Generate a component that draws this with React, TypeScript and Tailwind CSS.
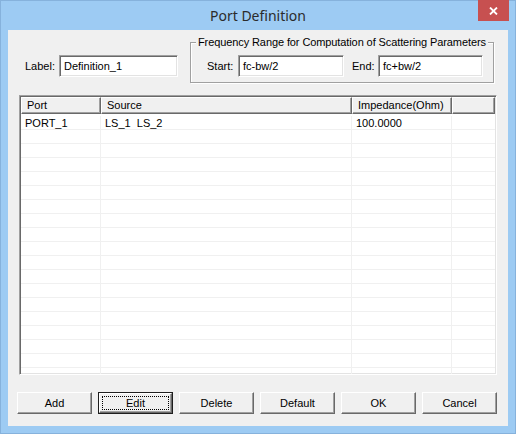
const raised =
  'bg-[#f0f0f0] border-t border-l border-t-white border-l-white border-r border-b border-r-[#696969] border-b-[#696969] shadow-[inset_-1px_-1px_0_#a0a0a0]'

const sunken =
  'border border-t-[#a0a0a0] border-l-[#a0a0a0] border-r-white border-b-white shadow-[inset_1px_1px_0_#696969,inset_-1px_-1px_0_#e3e3e3]'

function Field({ value, width }: { value: string; width: string }) {
  return (
    <div className={`${sunken} ${width} h-[22px] bg-white flex items-center pl-[4px] pt-[1px]`}>
      {value}
    </div>
  )
}

function Button({ label, isDefault = false }: { label: string; isDefault?: boolean }) {
  if (isDefault) {
    return (
      <div className="w-[75px] h-[22px] border border-[#1e1e1e] flex">
        <div className={`${raised} flex-1 flex p-[2px]`}>
          <div className="flex-1 border border-dotted border-black flex items-center justify-center">
            {label}
          </div>
        </div>
      </div>
    )
  }
  return (
    <div className={`${raised} w-[75px] h-[22px] flex items-center justify-center`}>
      {label}
    </div>
  )
}

const columns = [
  { title: 'Port', width: 'w-[80px]' },
  { title: 'Source', width: 'w-[251px]' },
  { title: 'Impedance(Ohm)', width: 'w-[100px]' },
  { title: '', width: 'flex-1' },
]

const rows = [['PORT_1', 'LS_1  LS_2', '100.0000', '']]

export default function App() {
  const blank = Array.from({ length: 19 }, () => ['', '', '', ''])
  const allRows = [...rows, ...blank]

  return (
    <div className="w-[516px] h-[434px] bg-[#9dcbf3] border border-[#86b2dc] flex flex-col font-['Liberation_Sans',sans-serif] text-[11px] text-black">
      {/* title bar */}
      <div className="relative h-[29px] flex items-center justify-center">
        <span className="font-['Noto_Sans',sans-serif] text-[14px] text-[#2b2b2b] -mt-[1px]">Port Definition</span>
        <div className="absolute -top-[1px] right-[6px] w-[31px] h-[21px] bg-[#c75050] flex items-center justify-center">
          <svg width="9" height="8" viewBox="0 0 9 8">
            <path d="M1 0.5 L8 7.5 M8 0.5 L1 7.5" stroke="white" strokeWidth="1.8" />
          </svg>
        </div>
      </div>

      {/* client area */}
      <div className="mx-[7px] h-[396px] bg-[#f0f0f0] flex flex-col">
        <div className="flex items-start">
          <div className="ml-[17px] mt-[25px] flex items-center">
            <span className="w-[34px]">Label:</span>
            <Field value="Definition_1" width="w-[119px]" />
          </div>

          <div className="relative ml-[12px] mt-[12px] w-[304px] h-[41px] border border-[#a0a0a0] shadow-[inset_1px_1px_0_#fff,1px_1px_0_#fff]">
            <span className="absolute -top-[8px] left-[5px] px-[2px] bg-[#f0f0f0] leading-[14px] whitespace-nowrap tracking-[-0.1px]">
              Frequency Range for Computation of Scattering Parameters
            </span>
            <div className="flex items-center pt-[12px] pl-[16px]">
              <span className="w-[31px]">Start:</span>
              <Field value="fc-bw/2" width="w-[106px]" />
              <span className="ml-[8px] w-[26px]">End:</span>
              <Field value="fc+bw/2" width="w-[105px]" />
            </div>
          </div>
        </div>

        {/* list */}
        <div className={`${sunken} ml-[11px] mt-[12px] w-[478px] h-[280px] bg-white p-[1px] flex flex-col overflow-hidden`}>
          <div className="flex h-[17px] shrink-0">
            {columns.map((c, i) => (
              <div
                key={i}
                className={`${c.width} ${raised} flex items-center pl-[5px] whitespace-nowrap`}
              >
                {c.title}
              </div>
            ))}
          </div>
          <div className="pt-[2px] flex flex-col">
            {allRows.map((r, ri) => (
              <div key={ri} className="flex h-[14px] shrink-0 border-b border-[#f0f0f0]">
                {r.map((cell, ci) => (
                  <div
                    key={ci}
                    className={`${columns[ci].width} ${ci < 3 ? 'border-r border-[#f0f0f0]' : ''} pl-[4px] pt-[1px] leading-[13px] whitespace-pre`}
                  >
                    {cell}
                  </div>
                ))}
              </div>
            ))}
          </div>
        </div>

        {/* buttons */}
        <div className="ml-[9px] mt-[17px] flex gap-[6px]">
          <Button label="Add" />
          <Button label="Edit" isDefault />
          <Button label="Delete" />
          <Button label="Default" />
          <Button label="OK" />
          <Button label="Cancel" />
        </div>
      </div>
    </div>
  )
}
